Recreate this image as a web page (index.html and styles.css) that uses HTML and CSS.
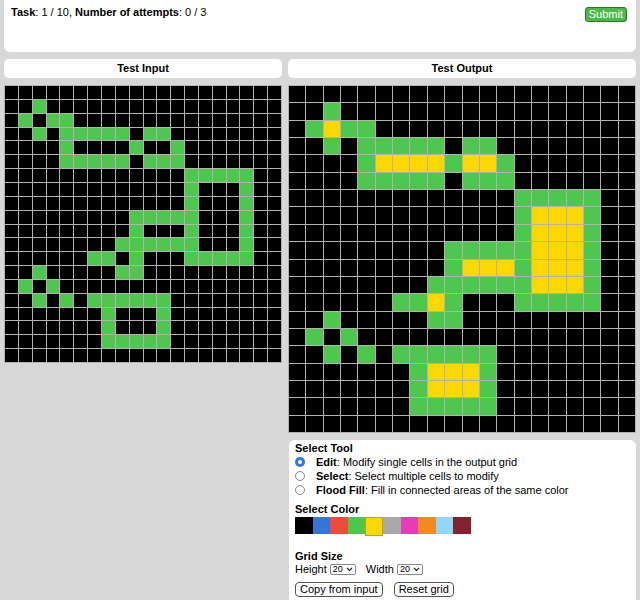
FILE: index.html
```html
<!DOCTYPE html>
<html lang="en">
<head>
<meta charset="utf-8">
<title>ARC Task</title>
<link rel="stylesheet" href="styles.css">
</head>
<body>
<div class="page">
  <div class="topbar">
    <div class="task-info"><b>Task</b>: 1 / 10, <b>Number of attempts</b>: 0 / 3</div>
    <button class="submit" type="button">Submit</button>
  </div>
  <div class="main">
    <div class="col col-in">
      <div class="heading">Test Input</div>
      <div class="grid grid-in" data-grid="input"></div>
    </div>
    <div class="col col-out">
      <div class="heading">Test Output</div>
      <div class="grid grid-out" data-grid="output"></div>
      <div class="controls">
        <div class="section-title">Select Tool</div>
        <label class="tool"><input type="radio" name="tool" checked><span><b>Edit</b>: Modify single cells in the output grid</span></label>
        <label class="tool"><input type="radio" name="tool"><span><b>Select</b>: Select multiple cells to modify</span></label>
        <label class="tool"><input type="radio" name="tool"><span><b>Flood Fill</b>: Fill in connected areas of the same color</span></label>
        <div class="section-title color-title">Select Color</div>
        <div class="swatches">
          <div class="swatch s0"></div>
          <div class="swatch s1"></div>
          <div class="swatch s2"></div>
          <div class="swatch s3"></div>
          <div class="swatch s4 selected"></div>
          <div class="swatch s5"></div>
          <div class="swatch s6"></div>
          <div class="swatch s7"></div>
          <div class="swatch s8"></div>
          <div class="swatch s9"></div>
        </div>
        <div class="section-title size-title">Grid Size</div>
        <div class="size-row">
          <span>Height</span>
          <span class="select-wrap"><select><option>20</option></select><svg class="chev" width="7" height="5" viewBox="0 0 7 5"><path d="M1 1l2.5 2.5L6 1" fill="none" stroke="#222" stroke-width="1.2"/></svg></span>
          <span class="width-label">Width</span>
          <span class="select-wrap"><select><option>20</option></select><svg class="chev" width="7" height="5" viewBox="0 0 7 5"><path d="M1 1l2.5 2.5L6 1" fill="none" stroke="#222" stroke-width="1.2"/></svg></span>
        </div>
        <div class="button-row">
          <button type="button" class="btn">Copy from input</button>
          <button type="button" class="btn">Reset grid</button>
        </div>
      </div>
    </div>
  </div>
</div>
<script src="script.js"></script>
</body>
</html>
```
FILE: styles.css
```css
* { box-sizing: border-box; }
html, body { margin: 0; }
body {
  background: #d9d8d9;
  font-family: "Liberation Sans", Arial, sans-serif;
  font-size: 11px;
  color: #000;
}
.page { padding: 0 4px; }

.topbar {
  height: 52px;
  background: #fff;
  border-radius: 0 0 6px 6px;
  display: flex;
  justify-content: space-between;
  align-items: flex-start;
  padding: 6px 9px 0 7px;
  line-height: 13px;
}
.submit {
  margin-top: 1px;
  font: inherit;
  line-height: 13px;
  height: 15px;
  padding: 0 3px;
  color: #fff;
  background: #4cb848;
  border: 1px solid #2e7a2c;
  border-radius: 3px;
}

.main {
  display: flex;
  gap: 6px;
  margin-top: 7px;
  align-items: flex-start;
}
.col { display: flex; flex-direction: column; gap: 7px; }
.col-in { width: 278px; }
.col-out { width: 348px; }

.heading {
  height: 19px;
  line-height: 19px;
  background: #fff;
  border-radius: 5px;
  text-align: center;
  font-weight: bold;
}

.grid {
  display: grid;
  gap: 1px;
  padding: 1px;
  background: #b2b2b2;
}
.grid-in {
  width: 278px;
  height: 278px;
  grid-template-columns: repeat(20, 1fr);
  grid-template-rows: repeat(20, 1fr);
}
.grid-out {
  width: 348px;
  height: 348px;
  grid-template-columns: repeat(20, 1fr);
  grid-template-rows: repeat(20, 1fr);
}
.cell { background: #000; }
.cell.c3 { background: #4dc74d; }
.cell.c4 { background: #fcd800; }

.controls {
  background: #fff;
  border-radius: 6px;
  padding: 2px 6px 10px;
  margin-left: 1px;
}
.section-title {
  font-weight: bold;
  line-height: 13px;
}
.tool {
  display: flex;
  align-items: center;
  gap: 11px;
  height: 14px;
  line-height: 14px;
}
.tool input {
  appearance: none;
  -webkit-appearance: none;
  margin: 0;
  width: 10px;
  height: 10px;
  border-radius: 50%;
  border: 1px solid #8a8a8a;
  background: #fff;
}
.tool input:checked {
  border: none;
  background: #fff;
  box-shadow: inset 0 0 0 3px #3478e5;
}

.color-title { margin-top: 5px; line-height: 14px; }
.swatches {
  display: flex;
  align-items: flex-start;
  margin-top: 1px;
}
.swatch {
  width: 17.6px;
  height: 17px;
}
.swatch.selected {
  height: 19px;
  border: 1px solid #c3a300;
}
.s0 { background: #000; }
.s1 { background: #3476d8; }
.s2 { background: #ec4c3c; }
.s3 { background: #4dc64c; }
.s4 { background: #fcd800; }
.s5 { background: #a9a9a9; }
.s6 { background: #e53db9; }
.s7 { background: #f08a22; }
.s8 { background: #8fd8f8; }
.s9 { background: #84222e; }

.size-title { margin-top: 14px; }
.size-row {
  display: flex;
  align-items: center;
  height: 13px;
  line-height: 13px;
}
.select-wrap {
  position: relative;
  display: inline-block;
  margin-left: 3px;
  height: 11px;
}
.select-wrap select {
  appearance: none;
  -webkit-appearance: none;
  display: block;
  width: 26px;
  height: 11px;
  margin: 0;
  padding: 0 0 0 2px;
  font-family: "Liberation Sans", Arial, sans-serif;
  font-size: 9px;
  line-height: 9px;
  color: #000;
  background: #fff;
  border: 1px solid #8a8a8a;
  border-radius: 2px;
}
.chev {
  position: absolute;
  right: 3px;
  top: 3px;
  pointer-events: none;
}
.width-label { margin-left: 10px; }

.button-row {
  display: flex;
  gap: 11px;
  margin-top: 6px;
}
.btn {
  font: inherit;
  line-height: 13px;
  height: 15px;
  padding: 0 4px;
  color: #000;
  background: #fff;
  border: 1px solid #555;
  border-radius: 4px;
}
```
FILE: script.js
```js
var grids = {
  input: [
    "00000000000000000000",
    "00300000000000000000",
    "03033000000000000000",
    "00303333303300000000",
    "00003000030030000000",
    "00003333303330000000",
    "00000000000003333300",
    "00000000000003000300",
    "00000000000003000300",
    "00000000033333000300",
    "00000000030003000300",
    "00000000333333000300",
    "00000033030003333300",
    "00300000330000000000",
    "03030000000000000000",
    "00303033333300000000",
    "00000003000300000000",
    "00000003000300000000",
    "00000003333300000000",
    "00000000000000000000"
  ],
  output: [
    "00000000000000000000",
    "00300000000000000000",
    "03433000000000000000",
    "00303333303300000000",
    "00003444434430000000",
    "00003333303330000000",
    "00000000000003333300",
    "00000000000003444300",
    "00000000000003444300",
    "00000000033333444300",
    "00000000034443444300",
    "00000000333333444300",
    "00000033430003333300",
    "00300000330000000000",
    "03030000000000000000",
    "00303033333300000000",
    "00000003444300000000",
    "00000003444300000000",
    "00000003333300000000",
    "00000000000000000000"
  ]
};
document.querySelectorAll("[data-grid]").forEach(function (el) {
  grids[el.dataset.grid].forEach(function (row) {
    for (var i = 0; i < row.length; i++) {
      var cell = document.createElement("div");
      cell.className = "cell c" + row[i];
      el.appendChild(cell);
    }
  });
});
```
